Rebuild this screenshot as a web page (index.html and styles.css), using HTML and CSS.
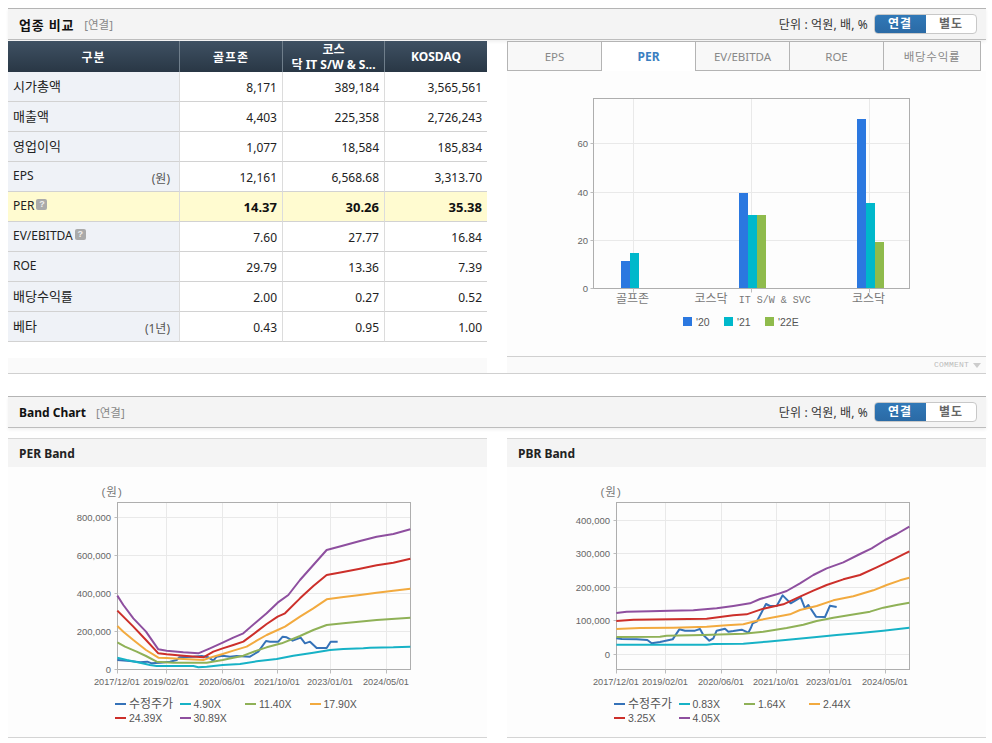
FILE: index.html
```html
<!DOCTYPE html>
<html lang="ko">
<head>
<meta charset="utf-8">
<title>업종 비교</title>
<link rel="stylesheet" href="styles.css">
</head>
<body>
<main class="page">
  <header class="bar">
    <div class="bar-title"><h2 class="ko-title">업종 비교</h2><span class="bar-tag">[연결]</span></div>
    <div class="bar-right"><span class="unit-text">단위 : 억원, 배, %</span>
      <div class="toggle"><span class="toggle-on">연결</span><span class="toggle-off">별도</span></div></div>
  </header>

  <section class="compare">
    <div class="col-left">
      <table class="grid">
        <colgroup><col class="c1"><col class="c2"><col class="c3"><col class="c4"></colgroup>
        <thead>
          <tr><th class="th-ko">구분</th><th class="th-ko">골프존</th><th class="th-two"><div class="th-clip">코스<br>닥 IT S/W &amp; S...</div></th><th>KOSDAQ</th></tr>
        </thead>
        <tbody>
          <tr><td class="lab"><div class="lab-in"><span class="ko">시가총액</span></div></td><td>8,171</td><td>389,184</td><td class="last">3,565,561</td></tr>
          <tr><td class="lab"><div class="lab-in"><span class="ko">매출액</span></div></td><td>4,403</td><td>225,358</td><td class="last">2,726,243</td></tr>
          <tr><td class="lab"><div class="lab-in"><span class="ko">영업이익</span></div></td><td>1,077</td><td>18,584</td><td class="last">185,834</td></tr>
          <tr><td class="lab"><div class="lab-in"><span>EPS</span><span class="unit">(원)</span></div></td><td>12,161</td><td>6,568.68</td><td class="last">3,313.70</td></tr>
          <tr class="hl"><td class="lab"><div class="lab-in"><span class="with-help">PER<i class="help">?</i></span></div></td><td>14.37</td><td>30.26</td><td class="last">35.38</td></tr>
          <tr><td class="lab"><div class="lab-in"><span class="with-help">EV/EBITDA<i class="help">?</i></span></div></td><td>7.60</td><td>27.77</td><td class="last">16.84</td></tr>
          <tr><td class="lab"><div class="lab-in"><span>ROE</span></div></td><td>29.79</td><td>13.36</td><td class="last">7.39</td></tr>
          <tr><td class="lab"><div class="lab-in"><span class="ko">배당수익률</span></div></td><td>2.00</td><td>0.27</td><td class="last">0.52</td></tr>
          <tr><td class="lab"><div class="lab-in"><span class="ko">베타</span><span class="unit">(1년)</span></div></td><td>0.43</td><td>0.95</td><td class="last">1.00</td></tr>
        </tbody>
      </table>
      <div class="strip-left"></div>
    </div>
    <div class="col-right">
      <div class="tabs">
        <span class="tab">EPS</span><span class="tab tab-on">PER</span><span class="tab">EV/EBITDA</span><span class="tab">ROE</span><span class="tab tab-last">배당수익률</span>
      </div>
      <div class="bar-chart-wrap">
        <svg class="bar-chart" width="436" height="285" viewBox="-30 -19 436 285">
          <path class="grid-l" d="M13.5 53.5H329.5M13.5 102.5H329.5M13.5 150.5H329.5M53.5 8.5V198.5M171.5 8.5V198.5M289.5 8.5V198.5"/>
          <rect class="frame" x="13.5" y="8.5" width="316" height="190"/>
          <path class="tick" d="M53.5 198.5v4M171.5 198.5v4M289.5 198.5v4M10.5 53.5h3M10.5 102.5h3M10.5 150.5h3M10.5 198.5h3"/>
          <rect class="s-blue" x="41" y="171" width="9" height="27"/>
          <rect class="s-blue" x="159" y="103" width="9" height="95"/>
          <rect class="s-blue" x="277" y="29" width="9" height="169"/>
          <rect class="s-teal" x="50" y="163" width="9" height="35"/>
          <rect class="s-teal" x="168" y="125" width="9" height="73"/>
          <rect class="s-teal" x="286" y="113" width="9" height="85"/>
          <rect class="s-green" x="177" y="125" width="9" height="73"/>
          <rect class="s-green" x="295" y="152" width="9" height="46"/>
          <g class="ax-y">
            <text x="8" y="57">60</text><text x="8" y="106">40</text><text x="8" y="154">20</text><text x="8" y="202">0</text>
          </g>
          <text class="ax-cat" x="36" y="213">골프존</text>
          <text class="ax-cat" x="114.500" y="213">코스닥<tspan class="ax-mono" dx="11">IT S/W &amp; SVC</tspan></text>
          <text class="ax-cat" x="272" y="213">코스닥</text>
          <rect class="s-blue" x="103" y="227" width="9" height="9"/><text class="lg-small" x="116" y="236">'20</text>
          <rect class="s-teal" x="144" y="227" width="9" height="9"/><text class="lg-small" x="157" y="236">'21</text>
          <rect class="s-green" x="185" y="227" width="9" height="9"/><text class="lg-small" x="198" y="236">'22E</text>
        </svg>
      </div>
      <div class="strip-right"><span class="comment">COMMENT</span><i class="comment-arrow"></i></div>
    </div>
  </section>

  <header class="bar bar-second">
    <div class="bar-title"><h2 class="en-title">Band Chart</h2><span class="bar-tag">[연결]</span></div>
    <div class="bar-right"><span class="unit-text">단위 : 억원, 배, %</span>
      <div class="toggle"><span class="toggle-on">연결</span><span class="toggle-off">별도</span></div></div>
  </header>

  <section class="bands">
    <article class="band">
      <h3 class="band-head">PER Band</h3>
      <div class="band-body">
        <svg class="band-svg" width="370" height="257" viewBox="0 0 370 257">
          <path class="grid-l" d="M57.5 37.5H350.5M57.5 75.5H350.5M57.5 113.5H350.5M57.5 151.5H350.5M106.5 22.5V189.5M162.5 22.5V189.5M217.5 22.5V189.5M270.5 22.5V189.5M326.5 22.5V189.5"/>
          <rect class="frame" x="57.5" y="22.5" width="293" height="167"/>
          <path class="tick" d="M57.5 189.5v4M106.5 189.5v4M162.5 189.5v4M217.5 189.5v4M270.5 189.5v4M326.5 189.5v4M54.5 37.5h3M54.5 75.5h3M54.5 113.5h3M54.5 151.5h3M54.5 189.5h3"/>
          <g class="lines" transform="scale(0.33333)">
            <polyline class="l-blue" points="172,540 210,543 240,547 262,545 275,550 300,548 330,545 350,540 358,532 400,530 425,528 445,532 460,542 470,530 488,527 510,530 530,528 570,530 578,525 595,515 618,483 630,485 655,485 668,470 680,472 698,482 722,473 735,490 750,485 770,504 800,504 812,485 833,485"/>
            <polyline class="l-teal" points="172,533 200,540 240,548 270,555 290,558 400,558 415,562 440,560 488,555 540,552 590,544 650,537 700,527 760,518 810,510 850,507 910,505 930,503 1000,502 1051,500"/>
            <polyline class="l-green" points="172,487 195,500 230,515 258,528 290,545 340,548 440,548 488,540 520,533 550,527 590,512 620,502 665,490 720,468 760,450 800,435 850,430 950,420 1051,413"/>
            <polyline class="l-orange" points="172,438 190,455 220,480 258,510 295,533 320,534 370,537 430,540 460,530 488,522 520,512 560,500 590,482 620,465 653,450 675,440 720,410 760,385 800,358 845,352 900,345 950,338 1000,332 1051,326"/>
            <polyline class="l-red" points="172,392 190,410 220,440 258,480 295,520 320,523 370,527 430,532 460,515 488,505 520,495 550,485 590,455 620,432 653,410 675,400 720,355 760,318 800,285 845,277 900,266 950,256 1000,248 1051,236"/>
            <polyline class="l-purple" points="172,347 190,375 220,415 258,455 295,508 320,512 370,517 415,520 450,505 488,488 520,473 550,460 590,425 620,400 653,368 685,345 720,300 760,255 800,210 845,198 900,183 950,170 1000,162 1051,148"/>
          </g>
          <text class="ax-unit" x="41.500" y="16">(원)</text>
          <g class="ax-y">
            <text x="51" y="41">800,000</text><text x="51" y="79">600,000</text><text x="51" y="117">400,000</text><text x="51" y="155">200,000</text><text x="51" y="193">0</text>
          </g>
          <g class="ax-x">
            <text x="57" y="205">2017/12/01</text><text x="106" y="205">2019/02/01</text><text x="162" y="205">2020/06/01</text><text x="217" y="205">2021/10/01</text><text x="270" y="205">2023/01/01</text><text x="326" y="205">2024/05/01</text>
          </g>
          <g class="legend">
            <path class="l-blue" d="M55 224h11"/><text class="lg-ko" x="69" y="228">수정주가</text>
            <path class="l-teal" d="M120 224h11"/><text x="133.500" y="228">4.90X</text>
            <path class="l-green" d="M185 224h11"/><text x="199" y="228">11.40X</text>
            <path class="l-orange" d="M250 224h11"/><text x="263.500" y="228">17.90X</text>
            <path class="l-red" d="M55 238h11"/><text x="69" y="242">24.39X</text>
            <path class="l-purple" d="M120 238h11"/><text x="133.500" y="242">30.89X</text>
          </g>
        </svg>
      </div>
    </article>
    <article class="band">
      <h3 class="band-head">PBR Band</h3>
      <div class="band-body">
        <svg class="band-svg" width="370" height="257" viewBox="0 0 370 257">
          <path class="grid-l" d="M56.5 40.500H349.5M56.5 73.5H349.5M56.5 107.5H349.5M56.5 140.5H349.5M56.5 174.5H349.5M105.5 22.5V189.5M161.5 22.5V189.5M216.5 22.5V189.5M269.5 22.5V189.5M325.5 22.5V189.5"/>
          <rect class="frame" x="56.5" y="22.5" width="293" height="167"/>
          <path class="tick" d="M56.5 189.5v4M105.5 189.5v4M161.5 189.5v4M216.5 189.5v4M269.5 189.5v4M325.5 189.5v4M53.5 40.5h3M53.5 73.5h3M53.5 107.5h3M53.5 140.5h3M53.5 174.5h3"/>
          <g class="lines" transform="scale(0.33333)">
            <polyline class="l-blue" points="169,475 185,477 230,478 262,480 275,490 300,486 338,478 358,448 375,452 405,452 420,447 430,465 448,482 460,475 470,452 495,446 505,455 520,453 545,449 565,458 572,445 578,430 590,425 618,372 630,378 650,378 668,346 692,370 722,352 735,385 745,375 768,410 795,411 810,377 830,381"/>
            <polyline class="l-teal" points="169,494 440,494 460,492 550,491 620,485 700,478 770,471 830,465 900,459 970,452 1048,443"/>
            <polyline class="l-green" points="169,471 300,470 320,467 430,465 550,461 610,455 680,444 730,434 770,423 820,413 870,405 930,395 970,383 1010,375 1048,368"/>
            <polyline class="l-orange" points="169,447 240,444 340,443 440,440 500,436 550,433 600,420 650,410 690,403 720,390 770,378 820,361 880,349 940,331 980,315 1020,301 1048,293"/>
            <polyline class="l-red" points="169,423 220,419 330,418 440,416 520,406 560,403 610,386 670,373 720,350 760,332 800,315 850,298 900,285 950,262 1000,238 1048,214"/>
            <polyline class="l-purple" points="169,399 200,395 270,394 330,392 400,391 470,385 520,378 570,370 600,357 650,343 680,333 720,310 760,285 800,265 850,247 900,222 935,205 975,180 1010,162 1048,140"/>
          </g>
          <text class="ax-unit" x="40.500" y="16">(원)</text>
          <g class="ax-y">
            <text x="50" y="44">400,000</text><text x="50" y="77">300,000</text><text x="50" y="111">200,000</text><text x="50" y="144">100,000</text><text x="50" y="178">0</text>
          </g>
          <g class="ax-x">
            <text x="56" y="205">2017/12/01</text><text x="105" y="205">2019/02/01</text><text x="161" y="205">2020/06/01</text><text x="216" y="205">2021/10/01</text><text x="269" y="205">2023/01/01</text><text x="325" y="205">2024/05/01</text>
          </g>
          <g class="legend">
            <path class="l-blue" d="M54 224h11"/><text class="lg-ko" x="68" y="228">수정주가</text>
            <path class="l-teal" d="M119 224h11"/><text x="132.500" y="228">0.83X</text>
            <path class="l-green" d="M184 224h11"/><text x="198" y="228">1.64X</text>
            <path class="l-orange" d="M249 224h11"/><text x="263" y="228">2.44X</text>
            <path class="l-red" d="M54 238h11"/><text x="68" y="242">3.25X</text>
            <path class="l-purple" d="M119 238h11"/><text x="132.500" y="242">4.05X</text>
          </g>
        </svg>
      </div>
    </article>
  </section>
</main>
</body>
</html>
```
FILE: styles.css
```css
* { box-sizing: border-box; }
html, body { margin: 0; padding: 0; background: #fff; overflow: hidden; }
body {
  font-family: "Noto Sans", "Noto Sans CJK KR", sans-serif;
  font-size: 12px;
  color: #222;
}
.page { padding: 8px 6px 0 8px; width: 992px; height: 743px; }

.bar {
  height: 32px;
  display: flex;
  align-items: center;
  justify-content: space-between;
  background: #f4f4f4;
  border-top: 1px solid #b4b4b4;
  border-bottom: 1px solid #bdbdbd;
  box-shadow: 0 2px 3px rgba(0,0,0,.06);
  padding: 0 9px 0 11px;
}
.bar-second { margin-top: 22px; }
.bar-title { display: flex; align-items: center; }
.ko-title, .en-title { margin: 0; font-weight: 700; color: #111; }
.ko-title { font-size: 13px; letter-spacing: .8px; }
.en-title { font-size: 12px; }
.bar-tag { color: #888; font-size: 11.5px; margin-left: 10px; }
.bar-right { display: flex; align-items: center; }
.unit-text { font-size: 12px; color: #333; margin-right: 6px; letter-spacing: .15px; }
.toggle {
  display: flex;
  width: 103px;
  height: 20px;
  border-radius: 4px;
  overflow: hidden;
  border: 1px solid #c8c8c8;
  background: #fff;
  font-size: 12px;
  font-weight: 700;
  line-height: 18px;
  text-align: center;
  letter-spacing: 1px;
}
.toggle-on { width: 52px; margin: -1px 0 -1px -1px; line-height: 20px; color: #fff; background: linear-gradient(#3179b8, #2a69a4); }
.toggle-off { flex: 1; color: #666; }

.compare {
  display: flex;
  justify-content: space-between;
  height: 333px;
  margin-top: 1px;
  border-bottom: 1px solid #d0d0d0;
}
.col-left, .col-right { width: 479px; display: flex; flex-direction: column; }
.col-left { justify-content: space-between; }

.grid { width: 479px; border-collapse: separate; border-spacing: 0; table-layout: fixed; }
.c1 { width: 172px; } .c2 { width: 103px; } .c3 { width: 102px; } .c4 { width: 102px; }
.grid th {
  height: 31px;
  padding: 0 4px;
  background: linear-gradient(#3f5163, #293745);
  border-right: 1px solid #6f7e8b;
  color: #fff;
  font-size: 12px;
  font-weight: 700;
  text-align: center;
}
.grid th:last-child { border-right: 0; }
.th-ko { letter-spacing: 1px; }
.grid .th-two { padding: 0; line-height: 15px; }
.th-clip { white-space: nowrap; overflow: hidden; }
.grid td {
  height: 30px;
  padding: 1px 5px 0 0;
  text-align: right;
  font-size: 12px;
  color: #222;
  border-right: 1px solid #dcdcdc;
  border-bottom: 1px solid #d2d2d2;
}
.grid td.last { border-right: 0; }
.grid td.lab { background: #eff2f7; text-align: left; padding: 0 9px 3px 5px; color: #222; }
.lab-in { display: flex; justify-content: space-between; align-items: center; }
.ko { font-size: 13px; }
.unit { font-size: 12px; color: #555; margin-top: 5px; }
.with-help { display: inline-flex; align-items: center; }
.help {
  width: 11px; height: 11px; margin: -2px 0 0 2px;
  border-radius: 2px;
  background: #aaa; color: #eee;
  font: 700 9px/11px "Liberation Sans", sans-serif;
  text-align: center;
}
.hl td { background: #fffbd0; font-weight: 700; font-size: 13px; color: #111; }
.grid .hl td.lab { background: #fffbd0; font-weight: 400; font-size: 12px; }
.strip-left { height: 15px; background: #fafafa; }

.tabs { display: flex; height: 30px; }
.tab {
  width: 94px; flex: none;
  display: flex; align-items: center; justify-content: center;
  background: #f8f8f8;
  border: 1px solid #b4b4b4;
  border-left: 0;
  color: #888;
  font-size: 11.5px;
}
.tab:first-child { width: 95px; border-left: 1px solid #b4b4b4; }
.tab-on { background: #fff; border-bottom: 0; color: #3b7fc1; font-weight: 700; font-size: 12px; }
.tab-last { width: 97px; letter-spacing: .7px; }
.bar-chart-wrap { flex: 1; background: #fdfdfd; padding: 0 0 0 43px; overflow: hidden; }
.bar-chart { display: block; }
.strip-right {
  height: 17px;
  flex: none;
  background: #fafafa;
  border-top: 1px solid #d0d0d0;
  display: flex; align-items: center; justify-content: flex-end;
  padding-right: 5px;
}
.comment { font: 8px/1 "Liberation Mono", monospace; color: #bbb; letter-spacing: .2px; }
.comment-arrow {
  width: 0; height: 0; margin-left: 4px;
  border-left: 4px solid transparent; border-right: 4px solid transparent; border-top: 5px solid #ccc;
}

.bands { display: flex; justify-content: space-between; margin-top: 10px; }
.band { width: 479px; height: 300px; background: #fdfdfd; border-bottom: 1px solid #d4d4d4; }
.band-head {
  margin: 0; height: 29px;
  padding: 0 11px;
  background: #f4f4f4;
  border-top: 1px solid #d8d8d8;
  font-size: 12px; font-weight: 700; line-height: 30px; color: #222;
}
.band-body { padding: 13px 0 0 52px; }
.band:last-child .band-body { padding-left: 53px; }
.band-svg { display: block; }

svg text { font-family: "Liberation Sans", "Noto Sans CJK KR", sans-serif; }
.grid-l { fill: none; stroke: #e9e9e9; stroke-width: 1; }
.frame { fill: none; stroke: #aeaeae; stroke-width: 1; }
.tick { fill: none; stroke: #bdbdbd; stroke-width: 1; }
.s-blue { fill: #2b78e0; }
.s-teal { fill: #00b8cb; }
.s-green { fill: #8fbb4c; }
.ax-y text { text-anchor: end; font-size: 9.5px; fill: #666; }
.ax-x text { text-anchor: middle; font-size: 9.2px; fill: #666; }
.ax-unit { font-size: 11.5px; fill: #777; letter-spacing: 1px; }
.ax-cat { font-size: 12px; fill: #777; }
.ax-mono { font-family: "Liberation Mono", monospace; font-size: 10px; }
.lg-small { font-size: 10.5px; fill: #555; }
.lines polyline { fill: none; stroke-width: 6; stroke-linejoin: round; }
.legend path { fill: none; stroke-width: 2; }
.legend text { font-size: 10.5px; fill: #555; }
.legend .lg-ko { font-size: 12px; }
.l-blue { stroke: #3572b8; }
.l-teal { stroke: #17b2c6; }
.l-green { stroke: #8fb157; }
.l-orange { stroke: #f2aa3f; }
.l-red { stroke: #cc2f2a; }
.l-purple { stroke: #8e4f9f; }
```
